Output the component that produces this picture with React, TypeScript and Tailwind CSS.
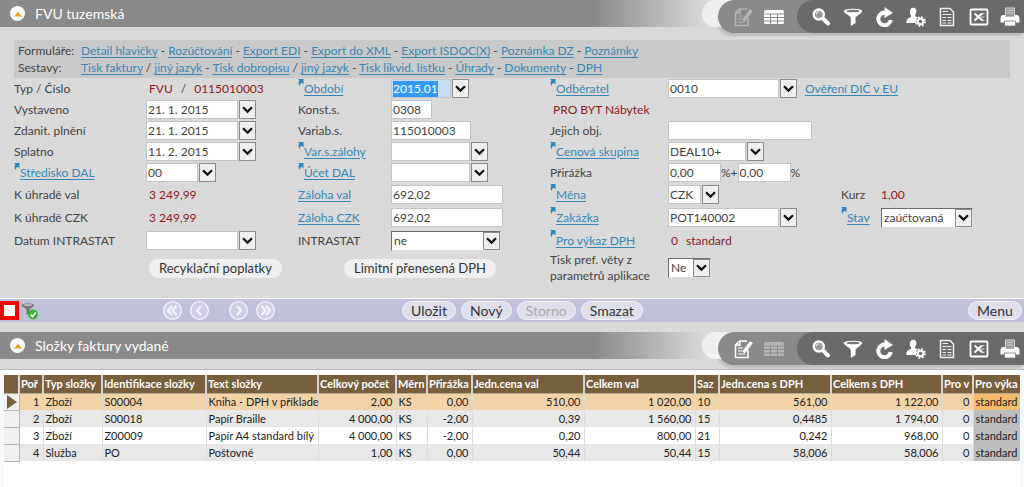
import { FunctionComponent, ReactNode, useId } from "react";

const Caret: FunctionComponent = () => (
  <svg width="11" height="8" viewBox="0 0 11 8" fill="none">
    <path d="M1 1.2 5.5 5.6 10 1.2" stroke="#111" strokeWidth="2.2" />
  </svg>
);

const Corner: FunctionComponent = () => (
  <svg className="shrink-0 self-start mt-px" width="6" height="7" viewBox="0 0 6 7">
    <path d="M0 0H5.500V5.500L3.800 3.800Q2 4.200 1.500 7-.5 3.600 1.500 1.600Z" fill="#2f86b8" />
  </svg>
);

interface LinkProps {
  children: ReactNode;
}

const Link: FunctionComponent<LinkProps> = ({ children }) => (
  <a href="#" className="text-[#3a87b5] underline underline-offset-2">
    {children}
  </a>
);

interface LabelProps {
  text: string;
  htmlFor?: string;
  link?: boolean;
  corner?: boolean;
}

const Label: FunctionComponent<LabelProps> = ({ text, htmlFor, link, corner }) => {
  const content = (
    <>
      {corner && <Corner />}
      {link ? <Link>{text}</Link> : text}
    </>
  );

  return htmlFor ? (
    <label htmlFor={htmlFor} className="flex items-center">
      {content}
    </label>
  ) : (
    <span className="flex items-center">{content}</span>
  );
};

interface FieldProps extends LabelProps {
  value: string;
  width: string;
  combo?: boolean;
  selected?: boolean;
  children?: ReactNode;
  span?: string;
}

const Field: FunctionComponent<FieldProps> = ({
  text,
  link,
  corner,
  value,
  width,
  combo,
  selected,
  children,
  span = "",
}) => {
  const id = useId();

  return (
    <>
      <Label text={text} htmlFor={id} link={link} corner={corner} />
      <div className={`flex items-center ${span}`}>
        <div className={`flex h-[19px] gap-px ${width}`}>
          <input
            id={id}
            defaultValue={value}
            autoFocus={selected}
            onFocus={(e) => selected && e.target.select()}
            className={`min-w-0 flex-1 border border-[#c4c4c4] px-px outline-none selection:bg-[#3399ff] selection:text-white ${
              selected ? "bg-[#c6dcf7]" : "bg-white"
            }`}
          />
          {combo && (
            <button
              aria-label={`${text} – výběr`}
              className="flex w-[17px] items-center justify-center border border-[#8a8a8a] bg-[#efefef]"
            >
              <Caret />
            </button>
          )}
        </div>
        {children}
      </div>
    </>
  );
};

interface SelectFieldProps extends LabelProps {
  options: string[];
  width: string;
  span?: string;
}

const SelectField: FunctionComponent<SelectFieldProps> = ({
  text,
  link,
  corner,
  options,
  width,
  span = "",
}) => {
  const id = useId();

  return (
    <>
      <Label text={text} htmlFor={id} link={link} corner={corner} />
      <div className={`flex items-center ${span}`}>
        <div className={`relative h-5 ${width}`}>
          <select
            id={id}
            className="h-full w-full appearance-none border border-[#dedede] border-t-[#6e6e6e] border-l-[#6e6e6e] bg-white pl-0.5"
          >
            {options.map((option) => (
              <option key={option}>{option}</option>
            ))}
          </select>
          <span className="pointer-events-none absolute top-px right-px bottom-px flex w-[17px] items-center justify-center border border-[#8a8a8a] bg-[#efefef]">
            <Caret />
          </span>
        </div>
      </div>
    </>
  );
};

interface ValueProps {
  children: ReactNode;
  span?: string;
}

const Value: FunctionComponent<ValueProps> = ({ children, span = "pl-[3px]" }) => (
  <span className={`flex items-center text-[#8b1a1e] ${span}`}>{children}</span>
);

const toolIcons: { name: string; icon: ReactNode }[] = [
  {
    name: "Hledat",
    icon: (
      <>
        <circle cx="7.800" cy="7.500" r="5" fill="#999" stroke="#fff" strokeWidth="2.400" />
        <path d="M5.300 7A2.600 2.600 0 0 1 7.800 4.800" fill="none" stroke="#fff" />
        <path d="M12.500 12 17 16.500" stroke="#fff" strokeWidth="4" strokeLinecap="round" />
      </>
    ),
  },
  {
    name: "Filtr",
    icon: (
      <>
        <path d="M.8 4C.8 1 19.200 1 19.200 4 19.200 6.500 12.500 9 12.500 11V16L7.800 19V11C7.800 9 .8 6.500.8 4Z" fill="#fff" />
        <ellipse cx="10" cy="4" rx="6.600" ry="1.300" fill="#777" />
      </>
    ),
  },
  {
    name: "Obnovit",
    icon: (
      <>
        <path
          d="M12 5.800A6.300 6.300 0 1 0 16.800 13"
          fill="none"
          stroke="#fff"
          strokeWidth="4"
        />
        <path d="M10.500 0 19 6 10.500 11Z" fill="#fff" />
      </>
    ),
  },
  {
    name: "Uživatel",
    icon: (
      <>
        <path
          d="M7 .8C9.800.8 10.800 2.600 10.400 5 10.200 7 9 7.600 9 9L11.500 10.500C9.500 12 9.500 14 10.200 16H.5C.2 12.500 1 11.500 5 10V8.500C3.300 6.500 3.300.8 7 .8Z"
          fill="#fff"
        />
        <circle cx="14.500" cy="14.500" r="4.200" fill="none" stroke="#fff" strokeWidth="2.200" strokeDasharray="1.800 1.500" />
        <circle cx="14.500" cy="14.500" r="2.700" fill="none" stroke="#fff" strokeWidth="2" />
      </>
    ),
  },
  {
    name: "Sestava",
    icon: (
      <g fill="none" stroke="#eee" strokeWidth="1.500">
        <path d="M3.500 1.500H13L16.500 5V18.500H3.500Z" />
        <path d="M5.500 4.500H11M5.500 7.500H14.500M5.500 10.500H9M10.500 10.500H14.500M5.500 13.500H9M10.500 13.500H14.500M5.500 16H9M10.500 16H14.500" strokeWidth="1.200" />
      </g>
    ),
  },
  {
    name: "Excel",
    icon: (
      <>
        <rect x="1.500" y="2.500" width="17" height="15" rx="1" fill="none" stroke="#fff" strokeWidth="1.800" />
        <path d="M5.500 6.500 13.500 13.500M13 6.500 5.500 13.500" stroke="#fff" strokeWidth="2.200" />
        <path d="M12 6.500H15.500M12.500 10H15.500M12 13.500H15.500" stroke="#ddd" strokeWidth="1.200" />
      </>
    ),
  },
  {
    name: "Tisk",
    icon: (
      <>
        <rect x="5.500" y="1" width="9" height="9" fill="#999" stroke="#d5d5d5" />
        <path d="M7 3.500H13M7 6H13" stroke="#ccc" />
        <path d="M2.500 8H5V10H15V8H17.500Q19.500 9 19.500 11V15.500H.5V11Q.5 9 2.500 8Z" fill="#fff" />
        <path d="M4.500 14H15.500V19H4.500Z" fill="#fff" stroke="#777" strokeWidth=".8" />
      </>
    ),
  },
];

interface TitleBarProps {
  title: string;
  tableActive?: boolean;
}

const TitleBar: FunctionComponent<TitleBarProps> = ({ title, tableActive }) => (
  <header className="relative flex h-[27px] items-center gap-2.5 bg-linear-to-r from-[#8a8a8a] from-58% to-[#e2e2e2] to-70% pl-2.5">
    <button aria-label="Sbalit" className="flex size-[15px] items-center justify-center rounded-full bg-white">
      <svg width="10" height="6" viewBox="0 0 10 6">
        <path d="M0 5.500Q3.500 4 5 .5 6.500 4 10 5.500Z" fill="#f39a1c" />
      </svg>
    </button>
    <h2 className="text-sm text-white">{title}</h2>
    <div className="absolute top-0 right-0 flex h-[33px] w-[306px] rounded-l-full bg-[#8a8a8a] shadow-[-2px_3px_2px_#bdbdbd]">
      <div className="absolute top-0 -left-4 h-[27px] w-8 rounded-l-full bg-[#efefef]" />
      <div className="relative flex w-full items-stretch rounded-l-full bg-[#8a8a8a]">
        <div className="flex w-[79px] items-center gap-2.5 pl-4">
          <button
            aria-label="Upravit"
            className={tableActive ? "text-[#b5b5b5]" : "text-white"}
          >
            <svg width="20" height="20" viewBox="0 0 20 20" fill="none" stroke="currentColor">
              <path d="M14 11V18.500H1.500V6L5.500 2H13" strokeWidth="1.500" />
              <path d="M2 6H6V2" strokeWidth="1.500" />
              <path d="M4 9H9M4 12H8M4 15H11" strokeWidth="1.200" />
              <path d="M9.500 13.500 17.500 3" strokeWidth="3.400" />
            </svg>
          </button>
          <button
            aria-label="Tabulka"
            className={tableActive ? "text-white" : "text-[#b5b5b5]"}
          >
            <svg width="20" height="20" viewBox="0 0 20 20" fill="currentColor">
              <path d="M2 3H18Q20 3 20 5V6.500H0V5Q0 3 2 3Z" />
              <path d="M0 7.500H6V10H0ZM7 7.500H13V10H7ZM14 7.500H20V10H14ZM0 11H6V13.500H0ZM7 11H13V13.500H7ZM14 11H20V13.500H14ZM0 14.500H6V17H1.500Q0 17 0 15.500ZM7 14.500H13V17H7ZM14 14.500H20V15.500Q20 17 18.500 17H14Z" />
            </svg>
          </button>
        </div>
        <div className="flex flex-1 items-center justify-between rounded-l-full bg-[#6a6a6a] pr-1 pl-3.5">
          {toolIcons.map(({ name, icon }) => (
            <button key={name} aria-label={name}>
              <svg width="20" height="20" viewBox="0 0 20 20">
                {icon}
              </svg>
            </button>
          ))}
        </div>
      </div>
    </div>
  </header>
);

const forms = [
  "Detail hlavičky",
  "Rozúčtování",
  "Export EDI",
  "Export do XML",
  "Export ISDOC(X)",
  "Poznámka DZ",
  "Poznámky",
];

const reports = [
  ["Tisk faktury", "jiný jazyk"],
  ["Tisk dobropisu", "jiný jazyk"],
  ["Tisk likvid. lístku"],
  ["Úhrady"],
  ["Dokumenty"],
  ["DPH"],
];

const LinkBox: FunctionComponent = () => (
  <nav className="bg-[#c9c9c9] px-1 py-0.5 leading-[17px]">
    <div className="flex">
      <span className="w-[63px]">Formuláře:</span>
      <p>
        {forms.map((form, index) => (
          <span key={form}>
            {index > 0 && " - "}
            <Link>{form}</Link>
          </span>
        ))}
      </p>
    </div>
    <div className="flex">
      <span className="w-[63px]">Sestavy:</span>
      <p>
        {reports.map(([report, language], index) => (
          <span key={report}>
            {index > 0 && " - "}
            <Link>{report}</Link>
            {language && (
              <>
                {" / "}
                <Link>{language}</Link>
              </>
            )}
          </span>
        ))}
      </p>
    </div>
  </nav>
);

const PillButton: FunctionComponent<LinkProps> = ({ children }) => (
  <button className="h-[19px] rounded-full bg-[#efefef] px-2.5 text-[13px] leading-none text-[#333]">
    {children}
  </button>
);

const groupRows = "grid grid-rows-[repeat(5,21px)_repeat(3,23px)_32px]";

const InvoiceForm: FunctionComponent = () => (
  <form className="grid grid-cols-[284fr_252fr_460fr]">
    <div className={`${groupRows} grid-cols-[132px_1fr]`}>
      <Label text="Typ / Číslo" />
      <Value>
        FVU <span className="px-2 text-[#444]">/</span> 0115010003
      </Value>
      <Field text="Vystaveno" value="21. 1. 2015" width="w-[110px]" combo />
      <Field text="Zdanit. plnění" value="21. 1. 2015" width="w-[110px]" combo />
      <Field text="Splatno" value="11. 2. 2015" width="w-[110px]" combo />
      <Field text="Středisko DAL" value="00" width="w-[70px]" combo link corner />
      <Label text="K úhradě val" />
      <Value>3 249,99</Value>
      <Label text="K úhradě CZK" />
      <Value>3 249,99</Value>
      <Field text="Datum INTRASTAT" value="" width="w-[110px]" combo />
      <div className="col-start-2 flex items-center pl-[3px]">
        <PillButton>Recyklační poplatky</PillButton>
      </div>
    </div>

    <div className={`${groupRows} grid-cols-[93px_1fr]`}>
      <Field text="Období" value="2015.01" width="w-[78px]" combo selected link corner />
      <Field text="Konst.s." value="0308" width="w-[41px]" />
      <Field text="Variab.s." value="115010003" width="w-20" />
      <Field text="Var.s.zálohy" value="" width="w-[97px]" combo link corner />
      <Field text="Účet DAL" value="" width="w-[97px]" combo link corner />
      <Field text="Záloha val" value="692,02" width="w-28" link />
      <Field text="Záloha CZK" value="692,02" width="w-28" link />
      <SelectField text="INTRASTAT" options={["ne", "ano"]} width="w-[110px]" />
      <div className="col-span-2 flex items-center justify-center pr-2">
        <PillButton>Limitní přenesená DPH</PillButton>
      </div>
    </div>

    <div className={`${groupRows} grid-cols-[118px_173px_40px_1fr]`}>
      <Field text="Odběratel" value="0010" width="w-[129px]" combo link corner span="col-span-3 gap-2">
        <Link>Ověření DIČ v EU</Link>
      </Field>
      <Value span="col-span-4 pl-[3px]">PRO BYT Nábytek</Value>
      <Field text="Jejich obj." value="" width="w-36" span="col-span-3" />
      <Field text="Cenová skupina" value="DEAL10+" width="w-24" combo link corner span="col-span-3" />
      <Field text="Přirážka" value="0,00" width="w-[53px]" span="col-span-3">
        %+
        <input
          aria-label="Přirážka 2"
          defaultValue="0,00"
          className="h-[19px] w-[53px] border border-[#c4c4c4] bg-white px-px"
        />
        %
      </Field>
      <Field text="Měna" value="CZK" width="w-[51px]" combo link corner />
      <Label text="Kurz" />
      <Value span="pl-0">1,00</Value>
      <Field text="Zakázka" value="POT140002" width="w-[129px]" combo link corner />
      <SelectField text="Stav" options={["zaúčtovaná"]} width="w-[92px]" link corner />
      <Label text="Pro výkaz DPH" link corner />
      <Value span="col-span-3 gap-2 pl-[3px]">
        <span>0</span> standard
      </Value>
      <SelectField
        text="Tisk pref. věty z parametrů aplikace"
        options={["Ne", "Ano"]}
        width="w-[43px]"
        span="col-span-3"
      />
    </div>
  </form>
);

const navButtons = [
  { name: "První", path: "M9 5 5 9.500 9 14M13.500 5 9.500 9.500 13.500 14", space: "" },
  { name: "Předchozí", path: "M11 5 7 9.500 11 14", space: "mr-3" },
  { name: "Další", path: "M8 5 12 9.500 8 14", space: "" },
  { name: "Poslední", path: "M5.500 5 9.500 9.500 5.500 14M10 5 14 9.500 10 14", space: "" },
];

interface BarButtonProps {
  children: ReactNode;
  disabled?: boolean;
}

const BarButton: FunctionComponent<BarButtonProps> = ({ children, disabled }) => (
  <button
    disabled={disabled}
    className="h-[19px] rounded-full border border-[#f3f3fa] bg-[#dfdfec] px-2 text-sm leading-none text-[#333] disabled:text-[#aaa]"
  >
    {children}
  </button>
);

const ActionBar: FunctionComponent = () => (
  <div className="grid h-6 grid-cols-[402fr_566fr_56fr] items-center border-t border-white bg-[#c0bfdc]">
    <div className="flex items-center">
      <button aria-label="Záznam" className="flex size-[19px] items-center justify-center bg-[#f40000]">
        <span className="size-[11px] bg-white" />
      </button>
      <button aria-label="Filtr" className="ml-0.5">
        <svg width="18" height="18" viewBox="0 0 18 18">
          <path d="M.5 3C.5 1 13 1 13 3 13 5 8.500 6.500 8.500 8V12L5.500 13V8C5.500 6.500.5 5 .5 3Z" fill="#777" />
          <ellipse cx="6.800" cy="3" rx="4.500" ry="1" fill="#bbb" />
          <circle cx="12" cy="12.500" r="5" fill="#35b52a" />
          <path d="M9.500 12.500 11.500 14.500 14.800 10.500" fill="none" stroke="#fff" strokeWidth="1.800" />
        </svg>
      </button>
      <div className="ml-[124px] flex gap-2">
        {navButtons.map(({ name, path, space }) => (
          <button key={name} aria-label={name} className={space}>
            <svg width="19" height="19" viewBox="0 0 19 19" fill="none" stroke="#f4f4fb">
              <circle cx="9.500" cy="9.500" r="8.800" fill="#cfcee2" strokeWidth="1.300" />
              <path d={path} strokeWidth="2.200" />
            </svg>
          </button>
        ))}
      </div>
    </div>
    <div className="flex gap-[5px]">
      <BarButton>Uložit</BarButton>
      <BarButton>Nový</BarButton>
      <BarButton disabled>Storno</BarButton>
      <BarButton>Smazat</BarButton>
    </div>
    <div>
      <BarButton>Menu</BarButton>
    </div>
  </div>
);

const columns = [
  { title: "Poř", width: "w-[24px]", right: true },
  { title: "Typ složky", width: "w-[59px]" },
  { title: "Identifikace složky", width: "w-[104px]" },
  { title: "Text složky", width: "w-[112px]" },
  { title: "Celkový počet", width: "w-[78px]", right: true },
  { title: "Měrn", width: "w-[31px]" },
  { title: "Přirážka", width: "w-[45px]", right: true },
  { title: "Jedn.cena val", width: "w-[112px]", right: true },
  { title: "Celkem val", width: "w-[111px]", right: true },
  { title: "Saz", width: "w-[24px]" },
  { title: "Jedn.cena s DPH", width: "w-[112px]", right: true },
  { title: "Celkem s DPH", width: "w-[111px]", right: true },
  { title: "Pro v", width: "w-[31px]", right: true },
  { title: "Pro výka", width: "w-[47px]" },
];

const rows = [
  ["1", "Zboží", "S00004", "Kniha - DPH v příklade", "2,00", "KS", "0,00", "510,00", "1 020,00", "10", "561,00", "1 122,00", "0", "standard"],
  ["2", "Zboží", "S00018", "Papír Braille", "4 000,00", "KS", "-2,00", "0,39", "1 560,00", "15", "0,4485", "1 794,00", "0", "standard"],
  ["3", "Zboží", "Z00009", "Papír A4 standard bílý", "4 000,00", "KS", "-2,00", "0,20", "800,00", "21", "0,242", "968,00", "0", "standard"],
  ["4", "Služba", "PO", "Poštovné", "1,00", "KS", "0,00", "50,44", "50,44", "15", "58,006", "58,006", "0", "standard"],
];

const ItemsTable: FunctionComponent = () => (
  <table className="w-full table-fixed border-collapse text-[11px] leading-4 whitespace-nowrap text-[#222]">
    <thead>
      <tr className="h-[18px] border-b border-[#b5a892] bg-[#78603f] text-left text-white">
        <th className="w-[15px]" />
        {columns.map(({ title, width }) => (
          <th key={title} className={`overflow-hidden border-l-2 border-l-[#d8d4cc] p-0 pl-px ${width}`}>
            {title}
          </th>
        ))}
      </tr>
    </thead>
    <tbody>
      {rows.map((row, index) => (
        <tr
          key={row[0]}
          className={index === 0 ? "h-[17px] bg-[#f3d2a8]" : "h-[17px] odd:bg-white even:bg-[#e7e7e7]"}
        >
          <td className="border-r border-b border-[#b5b5b5] bg-[#f0f0f0] p-0">
            {index === 0 && (
              <svg className="ml-[3px]" width="10" height="14" viewBox="0 0 10 14">
                <path d="M0 0 10 7 0 14Z" fill="#78603f" />
              </svg>
            )}
          </td>
          {row.map((cell, cellIndex) => (
            <td
              key={cellIndex}
              className={`border-l border-[#dadada] p-0 ${
                columns[cellIndex].right ? "pr-[3px] text-right" : "pl-0.5"
              } ${cellIndex === 13 ? (index === 0 ? "bg-[#f5bb6b]" : "bg-[#bdbdbd]") : ""}`}
            >
              {cell}
            </td>
          ))}
        </tr>
      ))}
    </tbody>
  </table>
);

const App: FunctionComponent = () => (
  <div className="flex min-h-screen flex-col bg-[#d9d9d9] font-['Lato','Noto_Sans',sans-serif] text-xs text-[#444]">
    <TitleBar title="FVU tuzemská" tableActive />
    <main className="px-3.5 pt-[13px] pb-3.5">
      <LinkBox />
      <InvoiceForm />
    </main>
    <ActionBar />
    <section className="mt-2.5 flex flex-1 flex-col">
      <TitleBar title="Složky faktury vydané" />
      <div className="mt-2.5 flex flex-1 border-t border-[#b8b8c0] bg-[#f5f8fc] px-1">
        <div className="flex-1 bg-white pt-[5px]">
          <ItemsTable />
        </div>
      </div>
    </section>
  </div>
);

export default App;
